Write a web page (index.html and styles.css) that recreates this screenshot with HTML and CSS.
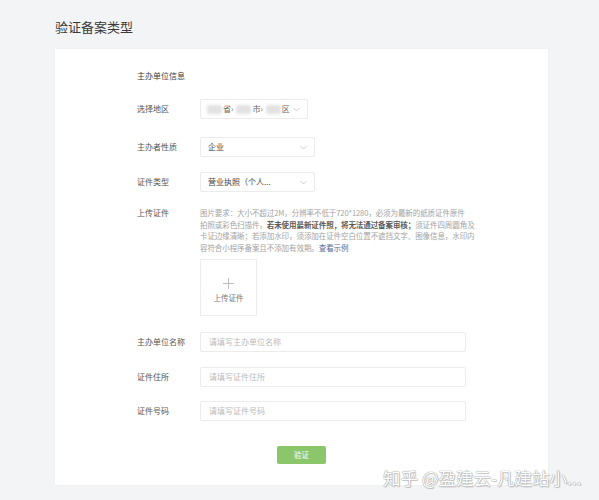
FILE: index.html
```html
<!DOCTYPE html>
<html lang="zh-CN">
<head>
<meta charset="utf-8">
<title>验证备案类型</title>
<link rel="stylesheet" href="styles.css">
</head>
<body>
<div class="page">
  <h1 class="title">验证备案类型</h1>
  <div class="card">
    <div class="section">主办单位信息</div>
    <div class="row r1">
      <div class="label">选择地区</div>
      <div class="box select region">
        <span class="blur"></span><span class="rt">省›</span>
        <span class="blur"></span><span class="rt">市›</span>
        <span class="blur"></span><span class="rt">区</span>
        <svg class="chev" width="7" height="5" viewBox="0 0 7 5"><polyline points="0.5,1 3.5,4 6.5,1" fill="none" stroke="#c4c4c4" stroke-width="0.8"/></svg>
      </div>
    </div>
    <div class="row r2">
      <div class="label">主办者性质</div>
      <div class="box select w115">
        <span class="val">企业</span>
        <svg class="chev" width="7" height="5" viewBox="0 0 7 5"><polyline points="0.5,1 3.5,4 6.5,1" fill="none" stroke="#c4c4c4" stroke-width="0.8"/></svg>
      </div>
    </div>
    <div class="row r3">
      <div class="label">证件类型</div>
      <div class="box select w115">
        <span class="val">营业执照（个人...</span>
        <svg class="chev" width="7" height="5" viewBox="0 0 7 5"><polyline points="0.5,1 3.5,4 6.5,1" fill="none" stroke="#c4c4c4" stroke-width="0.8"/></svg>
      </div>
    </div>
    <div class="row upload-row">
      <div class="label">上传证件</div>
      <div class="upload-col">
        <p class="hint">图片要求：大小不超过2M，分辨率不低于720*1280，必须为最新的纸质证件原件<br>拍照或彩色扫描件，<b>若未使用最新证件照，将无法通过备案审核；</b>须证件四周圆角及<br>卡证边缘清晰；若添加水印，须添加在证件空白位置不遮挡文字、图像信息，水印内<br>容符合小程序备案且不添加有效期。<a class="link">查看示例</a></p>
        <div class="uploader">
          <span class="plus"></span>
          <span class="up-text">上传证件</span>
        </div>
      </div>
    </div>
    <div class="row r4">
      <div class="label">主办单位名称</div>
      <div class="box input"><span class="ph">请填写主办单位名称</span></div>
    </div>
    <div class="row r5">
      <div class="label">证件住所</div>
      <div class="box input"><span class="ph">请填写证件住所</span></div>
    </div>
    <div class="row r6">
      <div class="label">证件号码</div>
      <div class="box input"><span class="ph">请填写证件号码</span></div>
    </div>
    <div class="actions">
      <button class="btn">验证</button>
    </div>
  </div>
</div>
<div class="watermark">知乎 @盈建云-凡建站小...</div>
</body>
</html>
```

FILE: styles.css
```css
html, body {
  margin: 0;
  padding: 0;
  background: #f3f4f6;
  width: 599px;
  height: 500px;
  overflow: hidden;
  font-family: "Noto Sans CJK SC", "Noto Sans", sans-serif;
  color: #333;
}
.page {
  padding: 0 51px 0 55px;
}
.title {
  margin: 0;
  height: 49px;
  font-size: 13px;
  line-height: 14px;
  padding-top: 20px;
  box-sizing: border-box;
  font-weight: 400;
  color: #3a3a3a;
}
.card {
  background: #fff;
  height: 436px;
  box-sizing: border-box;
  padding: 21px 0 0 82px;
  box-shadow: 0 0 2px rgba(0,0,0,0.04);
}
.section {
  font-size: 8px;
  line-height: 12px;
  height: 12px;
  color: #3c3c3c;
}
.row {
  display: flex;
  align-items: center;
}
.label {
  width: 63px;
  flex: none;
  font-size: 8px;
  line-height: 12px;
  color: #555;
}
.r1 { margin-top: 17px; }
.r2 { margin-top: 18px; }
.r3 { margin-top: 15px; }
.upload-row { margin-top: 15px; align-items: flex-start; }
.r4 { margin-top: 16px; }
.r5 { margin-top: 15px; }
.r6 { margin-top: 14px; }
.box {
  height: 20px;
  box-sizing: border-box;
  border: 1px solid #ececec;
  border-radius: 2px;
  display: flex;
  align-items: center;
  padding: 0 7px;
  font-size: 8px;
  line-height: 12px;
}
.select .chev { margin-left: auto; }
.region { width: 108px; padding-left: 6px; }
.w115 { width: 115px; }
.val { color: #444; }
.blur {
  display: inline-block;
  width: 15px;
  height: 9px;
  background: #e2e2e2;
  border-radius: 2px;
  filter: blur(1.5px);
  margin-right: 1px;
}
.rt { color: #666; margin-right: 3px; }
.input { width: 266px; padding-left: 8px; }
.ph { color: #bbb; }
.upload-col { display: flex; flex-direction: column; }
.hint {
  margin: 0;
  font-size: 7.5px;
  line-height: 11.7px;
  color: #a3a3a3;
  white-space: nowrap;
  letter-spacing: -0.08px;
}
.hint b { color: #5a5a5a; font-weight: 700; }
.link { color: #576b95; }
.uploader {
  margin-top: 5px;
  width: 57px;
  height: 57px;
  box-sizing: border-box;
  border: 1px solid #eeeeee;
  display: flex;
  flex-direction: column;
  align-items: center;
  padding-top: 18px;
}
.plus {
  position: relative;
  width: 11px;
  height: 11px;
}
.plus::before, .plus::after {
  content: "";
  position: absolute;
  background: #bdbdbd;
}
.plus::before { left: 0; top: 5px; width: 11px; height: 1px; }
.plus::after { left: 5px; top: 0; width: 1px; height: 11px; }
.up-text {
  margin-top: 3px;
  font-size: 7.5px;
  line-height: 11px;
  color: #777;
}
.actions {
  margin-top: 25px;
  margin-left: -82px;
  display: flex;
  justify-content: center;
}
.btn {
  width: 49px;
  height: 18px;
  border: 0;
  border-radius: 2px;
  background: #8cc66a;
  color: #fff;
  font-family: inherit;
  font-size: 7.5px;
  line-height: 12px;
  padding: 0;
}
.watermark {
  position: absolute;
  left: 383px;
  top: 466px;
  font-size: 17.5px;
  line-height: 24px;
  color: #fff;
  white-space: nowrap;
  text-shadow: 0 0 1px #999, 0 0 1px #999, 1px 1px 1px rgba(0,0,0,0.2);
}
```
